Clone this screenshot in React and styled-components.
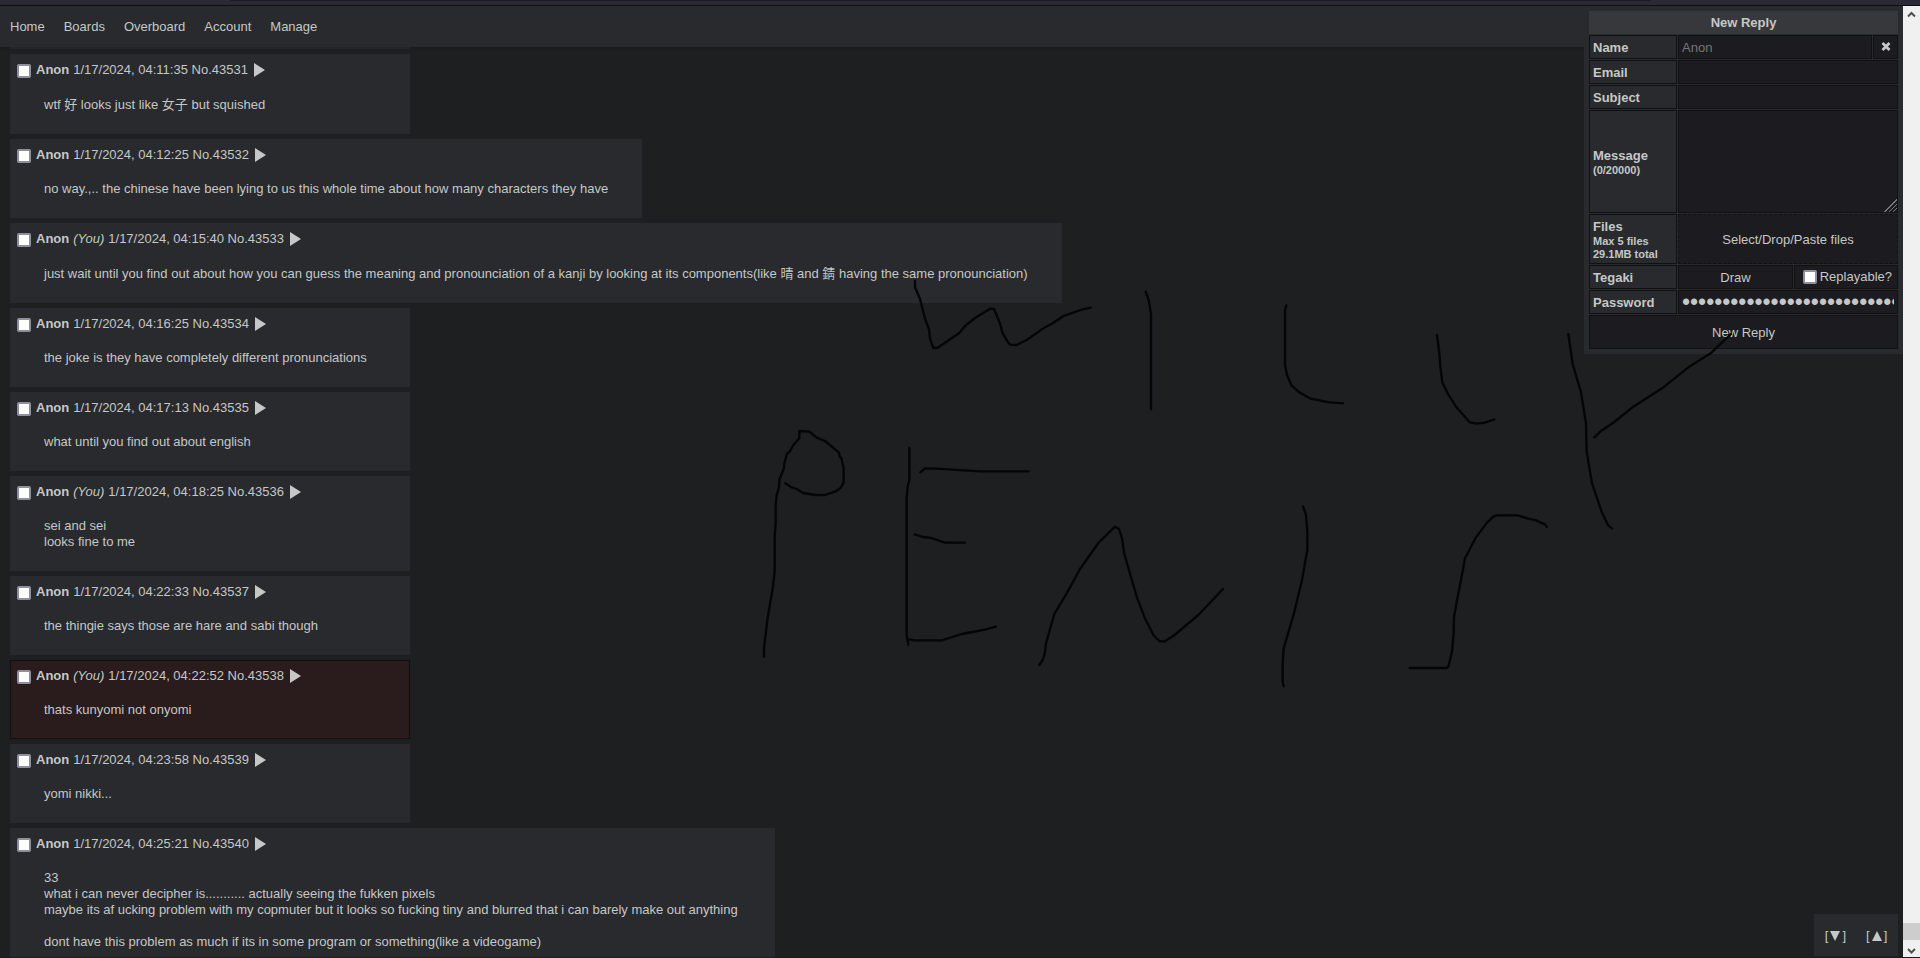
import React, { useState } from 'react';
import styled, { createGlobalStyle, css } from 'styled-components';

const TOPBAR_HEIGHT = 41;
const PANEL_WIDTH = 319;
const SCROLLBAR_WIDTH = 17;

const GlobalStyle = createGlobalStyle`
  * {
    box-sizing: border-box;
  }

  body {
    margin: 0;
    background: #1d1f21;
    color: #c5c8c6;
    font-family: "Liberation Sans", Arial, "Noto Sans CJK JP", sans-serif;
    font-size: 13px;
    line-height: 16px;
  }

  button, input, textarea {
    font: inherit;
    color: inherit;
    margin: 0;
  }
`;

const Window = styled.div`
  display: flex;
  flex-direction: column;
  height: 100vh;
  overflow: hidden;
`;

const WindowEdge = styled.div`
  flex: none;
  height: 6px;
  background: #2b2935;
  border-bottom: 1px solid #0e0e10;
`;

const TabStrip = styled.div`
  height: 1px;
  margin: 0 14% 0 12%;
  background: #1c1b22;
`;

const Viewport = styled.div`
  display: flex;
  flex: 1;
  min-height: 0;
  border-bottom: 1px solid #1c1b22;
`;

const Page = styled.div`
  position: relative;
  flex: 1;
  min-width: 0;
  overflow: hidden;
`;

const Topbar = styled.nav`
  position: relative;
  z-index: 1;
  display: flex;
  height: ${TOPBAR_HEIGHT}px;
  padding: 0 10px;
  gap: 19px;
  align-items: center;
  background: #282a2e;
  box-shadow: 0 0 3px 1px rgba(0, 0, 0, 0.2);
`;

const NavLink = styled.a`
  color: inherit;
  text-decoration: none;
  line-height: 21px;
`;

const Thread = styled.main`
  display: flex;
  flex-direction: column;
  align-items: flex-start;
  gap: 5px;
  padding: 0 10px;
`;

const postBox = css`
  min-width: 400px;
  background: #282a2e;
  border: 1px solid #282a2e;
`;

// tail end of the post that has scrolled under the topbar
const PostTail = styled.div`
  ${postBox}
  height: 2px;
`;

const PostBox = styled.article`
  ${postBox}
  padding: 4px 6px 8px;

  ${({ $highlighted }) => $highlighted && css`
    background: #2a1b1d;
    border-color: #111;
  `}
`;

const PostInfo = styled.header`
  display: flex;
  align-items: center;
  height: 22px;
  gap: 4px;
`;

const Checkbox = styled.input`
  appearance: none;
  flex: none;
  width: 14px;
  height: 14px;
  border: 2px solid #8f8f9d;
  border-radius: 2px;
  background: #fff;

  &:checked {
    background: #8f8f9d;
  }
`;

const PostCheckbox = styled(Checkbox)`
  margin: 2px 1px 0 0;
`;

const PostMenu = styled.button`
  display: flex;
  padding: 0;
  margin-left: 2px;
  border: none;
  background: none;
  cursor: pointer;
`;

const Message = styled.p`
  margin: 15px 27px 12px;
  white-space: pre;
`;

const Kanji = styled.span`
  font-family: "Noto Sans CJK JP", sans-serif;
`;

const ReplyPanel = styled.form`
  position: absolute;
  z-index: 2;
  top: 0;
  right: 0;
  display: flex;
  flex-direction: column;
  gap: 1px;
  width: ${PANEL_WIDTH}px;
  padding: 5px;
  background: #282a2e;
`;

const PanelTitle = styled.div`
  height: 23px;
  line-height: 23px;
  background: #37383c;
  font-weight: bold;
  text-align: center;
`;

const Row = styled.div`
  display: flex;
  gap: 1px;
  min-height: 24px;
`;

const Label = styled.label`
  display: flex;
  flex-direction: column;
  justify-content: center;
  flex: none;
  width: 88px;
  padding: 1px 3px 0;
  border: 1px solid #111;
  font-weight: bold;

  small {
    font-size: 11px;
    line-height: 13px;
  }
`;

const field = css`
  flex: 1;
  min-width: 0;
  padding: 1px 3px 0;
  border: 1px solid #111;
  border-radius: 0;
  outline: none;
  background: #1c1b20;
`;

const TextInput = styled.input`
  ${field}

  &::placeholder {
    color: #76777a;
  }

  &[type="password"] {
    height: 24px;
    font-size: 23px;
  }
`;

const TextArea = styled.textarea`
  ${field}
  display: block;
  height: 103px;
  resize: both;

  &::-webkit-resizer {
    background:
      linear-gradient(135deg, #1c1b20 50%, transparent 50%),
      repeating-linear-gradient(135deg, #77777a 0 1px, #1c1b20 1px 3px);
  }
`;

const FieldButton = styled.button`
  ${field}
  cursor: pointer;
`;

const ClearButton = styled(FieldButton)`
  flex: none;
  width: 25px;
  display: flex;
  align-items: center;
  justify-content: center;
  padding: 0;
`;

const FileDrop = styled(FieldButton)`
  min-height: 50px;
  border-style: dashed;
`;

const Replayable = styled.label`
  ${field}
  flex: none;
  width: 104px;
  display: flex;
  align-items: center;
  justify-content: flex-end;
  gap: 3px;
  padding: 0 5px;
`;

const SubmitButton = styled(FieldButton)`
  flex: none;
  height: 34px;
`;

const Drawing = styled.svg`
  position: absolute;
  z-index: 3;
  top: 244px;
  left: 740px;
  pointer-events: none;
`;

const JumpLinks = styled.div`
  position: absolute;
  right: 5px;
  bottom: 1px;
  z-index: 1;
  display: flex;
  align-items: center;
  justify-content: center;
  gap: 20px;
  width: 84px;
  height: 42px;
  padding-top: 2px;
  background: #282a2e;
`;

const JumpLink = styled.a`
  display: flex;
  align-items: center;
  gap: 2px;
  color: inherit;
  text-decoration: none;
`;

const Scrollbar = styled.div`
  display: flex;
  flex-direction: column;
  align-items: center;
  flex: none;
  width: ${SCROLLBAR_WIDTH}px;
  background: #f0f0f0;
`;

const ScrollArrow = styled.svg`
  flex: none;
  width: 17px;
  height: 17px;
`;

const ScrollThumb = styled.div`
  width: 100%;
  height: 17px;
  margin-top: auto;
  background: #cdcdcd;
`;

const links = ['Home', 'Boards', 'Overboard', 'Account', 'Manage'];

const posts = [
  { no: 43531, time: '04:11:35', text: 'wtf 好 looks just like 女子 but squished' },
  { no: 43532, time: '04:12:25', text: 'no way.,.. the chinese have been lying to us this whole time about how many characters they have' },
  { no: 43533, time: '04:15:40', you: true, text: 'just wait until you find out about how you can guess the meaning and pronounciation of a kanji by looking at its components(like 晴 and 錆 having the same pronounciation)' },
  { no: 43534, time: '04:16:25', text: 'the joke is they have completely different pronunciations' },
  { no: 43535, time: '04:17:13', text: 'what until you find out about english' },
  { no: 43536, time: '04:18:25', you: true, text: 'sei and sei\nlooks fine to me' },
  { no: 43537, time: '04:22:33', text: 'the thingie says those are hare and sabi though' },
  { no: 43538, time: '04:22:52', you: true, highlighted: true, text: 'thats kunyomi not onyomi' },
  { no: 43539, time: '04:23:58', text: 'yomi nikki...' },
  { no: 43540, time: '04:25:21', text: '33\nwhat i can never decipher is........... actually seeing the fukken pixels\nmaybe its af ucking problem with my copmuter but it looks so fucking tiny and blurred that i can barely make out anything \n\ndont have this problem as much if its in some program or something(like a videogame)' },
];

const strokes = [
  '525,93 525,112 540,147 555,205 567,238 570,265 580,294 592,294 657,250 675,228 705,204 750,176 762,177 780,220 788,250 803,275 811,284 830,285 860,270 910,235 938,220 970,198 1025,179 1052,173',
  '1217,125 1226,150 1233,192 1233,478',
  '1639,166 1635,180 1635,345 1641,375 1655,407 1678,427 1712,446 1768,457 1809,460',
  '2091,255 2098,310 2101,350 2107,397 2124,432 2148,470 2189,517 2210,521 2235,518 2263,508',
  '2485,252 2498,342 2523,427 2538,520 2540,605 2556,700 2585,785 2605,827 2616,835',
  '2563,562 2584,542 2623,516 2680,470 2773,410 2845,352 2912,310 2938,285 2973,252',
  '72,1220 72,1195 82,1110 92,1050 99,1010 104,965 104,860 107,820 107,765 110,735 117,712 118,690 132,654 133,640 141,611 149,605 160,585 178,565 178,543 208,545 230,563 255,573 297,608 299,620 304,624 311,655 311,697 302,714 285,725 255,735 225,735 190,729 170,717 157,713 136,700',
  '508,594 508,690 503,710 500,745 500,1155 505,1184',
  '541,667 555,655 590,656 720,664 866,664',
  '524,853 548,861 570,863 615,878 674,878',
  '508,1168 525,1171 605,1171 665,1152 735,1139 768,1130',
  '898,1245 908,1230 914,1212 918,1180 943,1092 983,1025 1020,957 1075,879 1125,830 1137,837 1146,865 1153,912 1190,1040 1215,1105 1240,1155 1258,1173 1272,1175 1300,1158 1375,1095 1449,1017',
  '1689,769 1698,795 1702,845 1702,900 1686,990 1662,1090 1631,1195 1628,1240 1628,1295 1631,1308',
  '2420,830 2416,824 2388,811 2365,806 2334,796 2272,796 2261,799 2241,818 2208,862 2175,925 2163,990 2153,1040 2142,1100 2141,1150 2136,1205 2125,1250 2121,1254 2009,1254',
];

function PostText({ text }) {
  return (
    <Message>
      {text.split(/([\u4e00-\u9fff]+)/).map((part, i) =>
        i % 2 ? <Kanji key={i} lang="ja">{part}</Kanji> : part
      )}
    </Message>
  );
}

function Post({ no, time, you, highlighted, text }) {
  return (
    <PostBox id={no} $highlighted={highlighted}>
      <PostInfo>
        <PostCheckbox type="checkbox" aria-label={`Select post ${no}`} />
        <strong>Anon</strong>
        {you && <em>(You)</em>}
        <span>1/17/2024, {time} No.{no}</span>
        <PostMenu type="button" aria-label="Post menu">
          <svg width="11" height="14" viewBox="0 0 11 14">
            <path d="M0 0L11 7L0 14Z" fill="#c5c8c6" />
          </svg>
        </PostMenu>
      </PostInfo>
      <PostText text={text} />
    </PostBox>
  );
}

function ReplyForm() {
  const [name, setName] = useState('');
  const [message, setMessage] = useState('');

  return (
    <ReplyPanel onSubmit={(e) => e.preventDefault()}>
      <PanelTitle>New Reply</PanelTitle>
      <Row>
        <Label htmlFor="name">Name</Label>
        <TextInput id="name" placeholder="Anon" value={name} onChange={(e) => setName(e.target.value)} />
        <ClearButton type="button" aria-label="Clear name" onClick={() => setName('')}>
          <svg width="10" height="10" viewBox="0 0 10 10">
            <path d="M1.500 1L8.500 8M8.500 1L1.500 8" stroke="#c5c8c6" strokeWidth="2.800" />
          </svg>
        </ClearButton>
      </Row>
      <Row>
        <Label htmlFor="email">Email</Label>
        <TextInput id="email" />
      </Row>
      <Row>
        <Label htmlFor="subject">Subject</Label>
        <TextInput id="subject" />
      </Row>
      <Row>
        <Label htmlFor="message">
          Message
          <small>({message.length}/20000)</small>
        </Label>
        <TextArea id="message" value={message} onChange={(e) => setMessage(e.target.value)} />
      </Row>
      <Row>
        <Label htmlFor="files">
          Files
          <small>Max 5 files</small>
          <small>29.1MB total</small>
        </Label>
        <FileDrop id="files" type="button">Select/Drop/Paste files</FileDrop>
      </Row>
      <Row>
        <Label htmlFor="tegaki">Tegaki</Label>
        <FieldButton id="tegaki" type="button">Draw</FieldButton>
        <Replayable>
          <Checkbox type="checkbox" />
          Replayable?
        </Replayable>
      </Row>
      <Row>
        <Label htmlFor="password">Password</Label>
        <TextInput id="password" type="password" defaultValue="correcthorsebatterystaplecorrect" />
      </Row>
      <SubmitButton type="submit">New Reply</SubmitButton>
    </ReplyPanel>
  );
}

export default function App() {
  return (
    <Window>
      <GlobalStyle />
      <WindowEdge>
        <TabStrip />
      </WindowEdge>
      <Viewport>
        <Page>
          <Topbar>
            {links.map((link) => (
              <NavLink key={link} href={`#${link.toLowerCase()}`}>{link}</NavLink>
            ))}
          </Topbar>
          <Thread>
            <PostTail />
            {posts.map((post) => (
              <Post key={post.no} {...post} />
            ))}
          </Thread>
          <ReplyForm />
          <JumpLinks>
            <JumpLink href="#bottom" aria-label="Bottom">
              [
              <svg width="10" height="10" viewBox="0 0 10 10">
                <path d="M0 0H10L5 10Z" fill="#c5c8c6" />
              </svg>
              ]
            </JumpLink>
            <JumpLink href="#top" aria-label="Top">
              [
              <svg width="10" height="10" viewBox="0 0 10 10">
                <path d="M0 10H10L5 0Z" fill="#c5c8c6" />
              </svg>
              ]
            </JumpLink>
          </JumpLinks>
          <Drawing width="1000" height="450" viewBox="0 0 3000 1350">
            <g fill="none" stroke="#050506" strokeWidth="7" strokeLinecap="round" strokeLinejoin="round">
              {strokes.map((points) => (
                <polyline key={points} points={points} />
              ))}
            </g>
          </Drawing>
        </Page>
        <Scrollbar>
          <ScrollArrow viewBox="0 0 17 17">
            <path d="M5 10.500L8.500 7L12 10.500" fill="none" stroke="#505050" strokeWidth="2" />
          </ScrollArrow>
          <ScrollThumb />
          <ScrollArrow viewBox="0 0 17 17">
            <path d="M5 9L8.500 12.500L12 9" fill="none" stroke="#505050" strokeWidth="2" />
          </ScrollArrow>
        </Scrollbar>
      </Viewport>
    </Window>
  );
}
